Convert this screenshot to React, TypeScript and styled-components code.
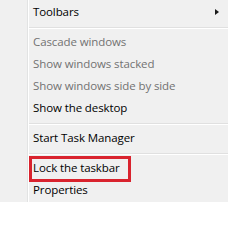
import React from "react";
import styled, { createGlobalStyle } from "styled-components";

const Global = createGlobalStyle`
  html, body { margin: 0; padding: 0; background: #ffffff; }
  body { font-family: "Open Sans", "Noto Sans", sans-serif; }
`;

const Menu = styled.div`
  width: 228px;
  padding: 1px 0;
  box-sizing: border-box;
  display: flex;
  flex-direction: column;
  background: linear-gradient(
    to right,
    #f0f0f0 0 27px,
    #e2e3e3 27px 28px,
    #ffffff 28px 29px,
    #f0f0f0 29px
  );
`;

const Item = styled.div<{ $disabled?: boolean }>`
  position: relative;
  height: 22px;
  display: flex;
  align-items: center;
  padding-left: 33px;
  padding-right: 9px;
  font-size: 11.5px;
  letter-spacing: -0.1px;
  color: ${(p) => (p.$disabled ? "#727272" : "#000000")};
  white-space: nowrap;
`;

const Label = styled.span`
  flex: 1;
  line-height: 22px;
`;

const SubArrow = styled.span`
  width: 0;
  height: 0;
  border-top: 3.5px solid transparent;
  border-bottom: 3.5px solid transparent;
  border-left: 4px solid #1a1a1a;
`;

const Separator = styled.div`
  height: 8px;
  margin-left: 29px;
  box-sizing: border-box;
  padding-top: 4px;
  &::before {
    content: "";
    display: block;
    height: 1px;
    background: #e0e0e0;
    border-bottom: 1px solid #ffffff;
  }
`;

const Highlight = styled.span`
  position: absolute;
  left: 29px;
  top: -1px;
  width: 102px;
  height: 26px;
  box-sizing: border-box;
  border: 3px solid #d9232e;
  pointer-events: none;
`;

export default function App() {
  return (
    <>
      <Global />
      <Menu>
        <Item>
          <Label>Toolbars</Label>
          <SubArrow />
        </Item>
        <Separator />
        <Item $disabled>
          <Label>Cascade windows</Label>
        </Item>
        <Item $disabled>
          <Label>Show windows stacked</Label>
        </Item>
        <Item $disabled>
          <Label>Show windows side by side</Label>
        </Item>
        <Item>
          <Label>Show the desktop</Label>
        </Item>
        <Separator />
        <Item>
          <Label>Start Task Manager</Label>
        </Item>
        <Separator />
        <Item>
          <Label>Lock the taskbar</Label>
          <Highlight />
        </Item>
        <Item>
          <Label>Properties</Label>
        </Item>
      </Menu>
    </>
  );
}
